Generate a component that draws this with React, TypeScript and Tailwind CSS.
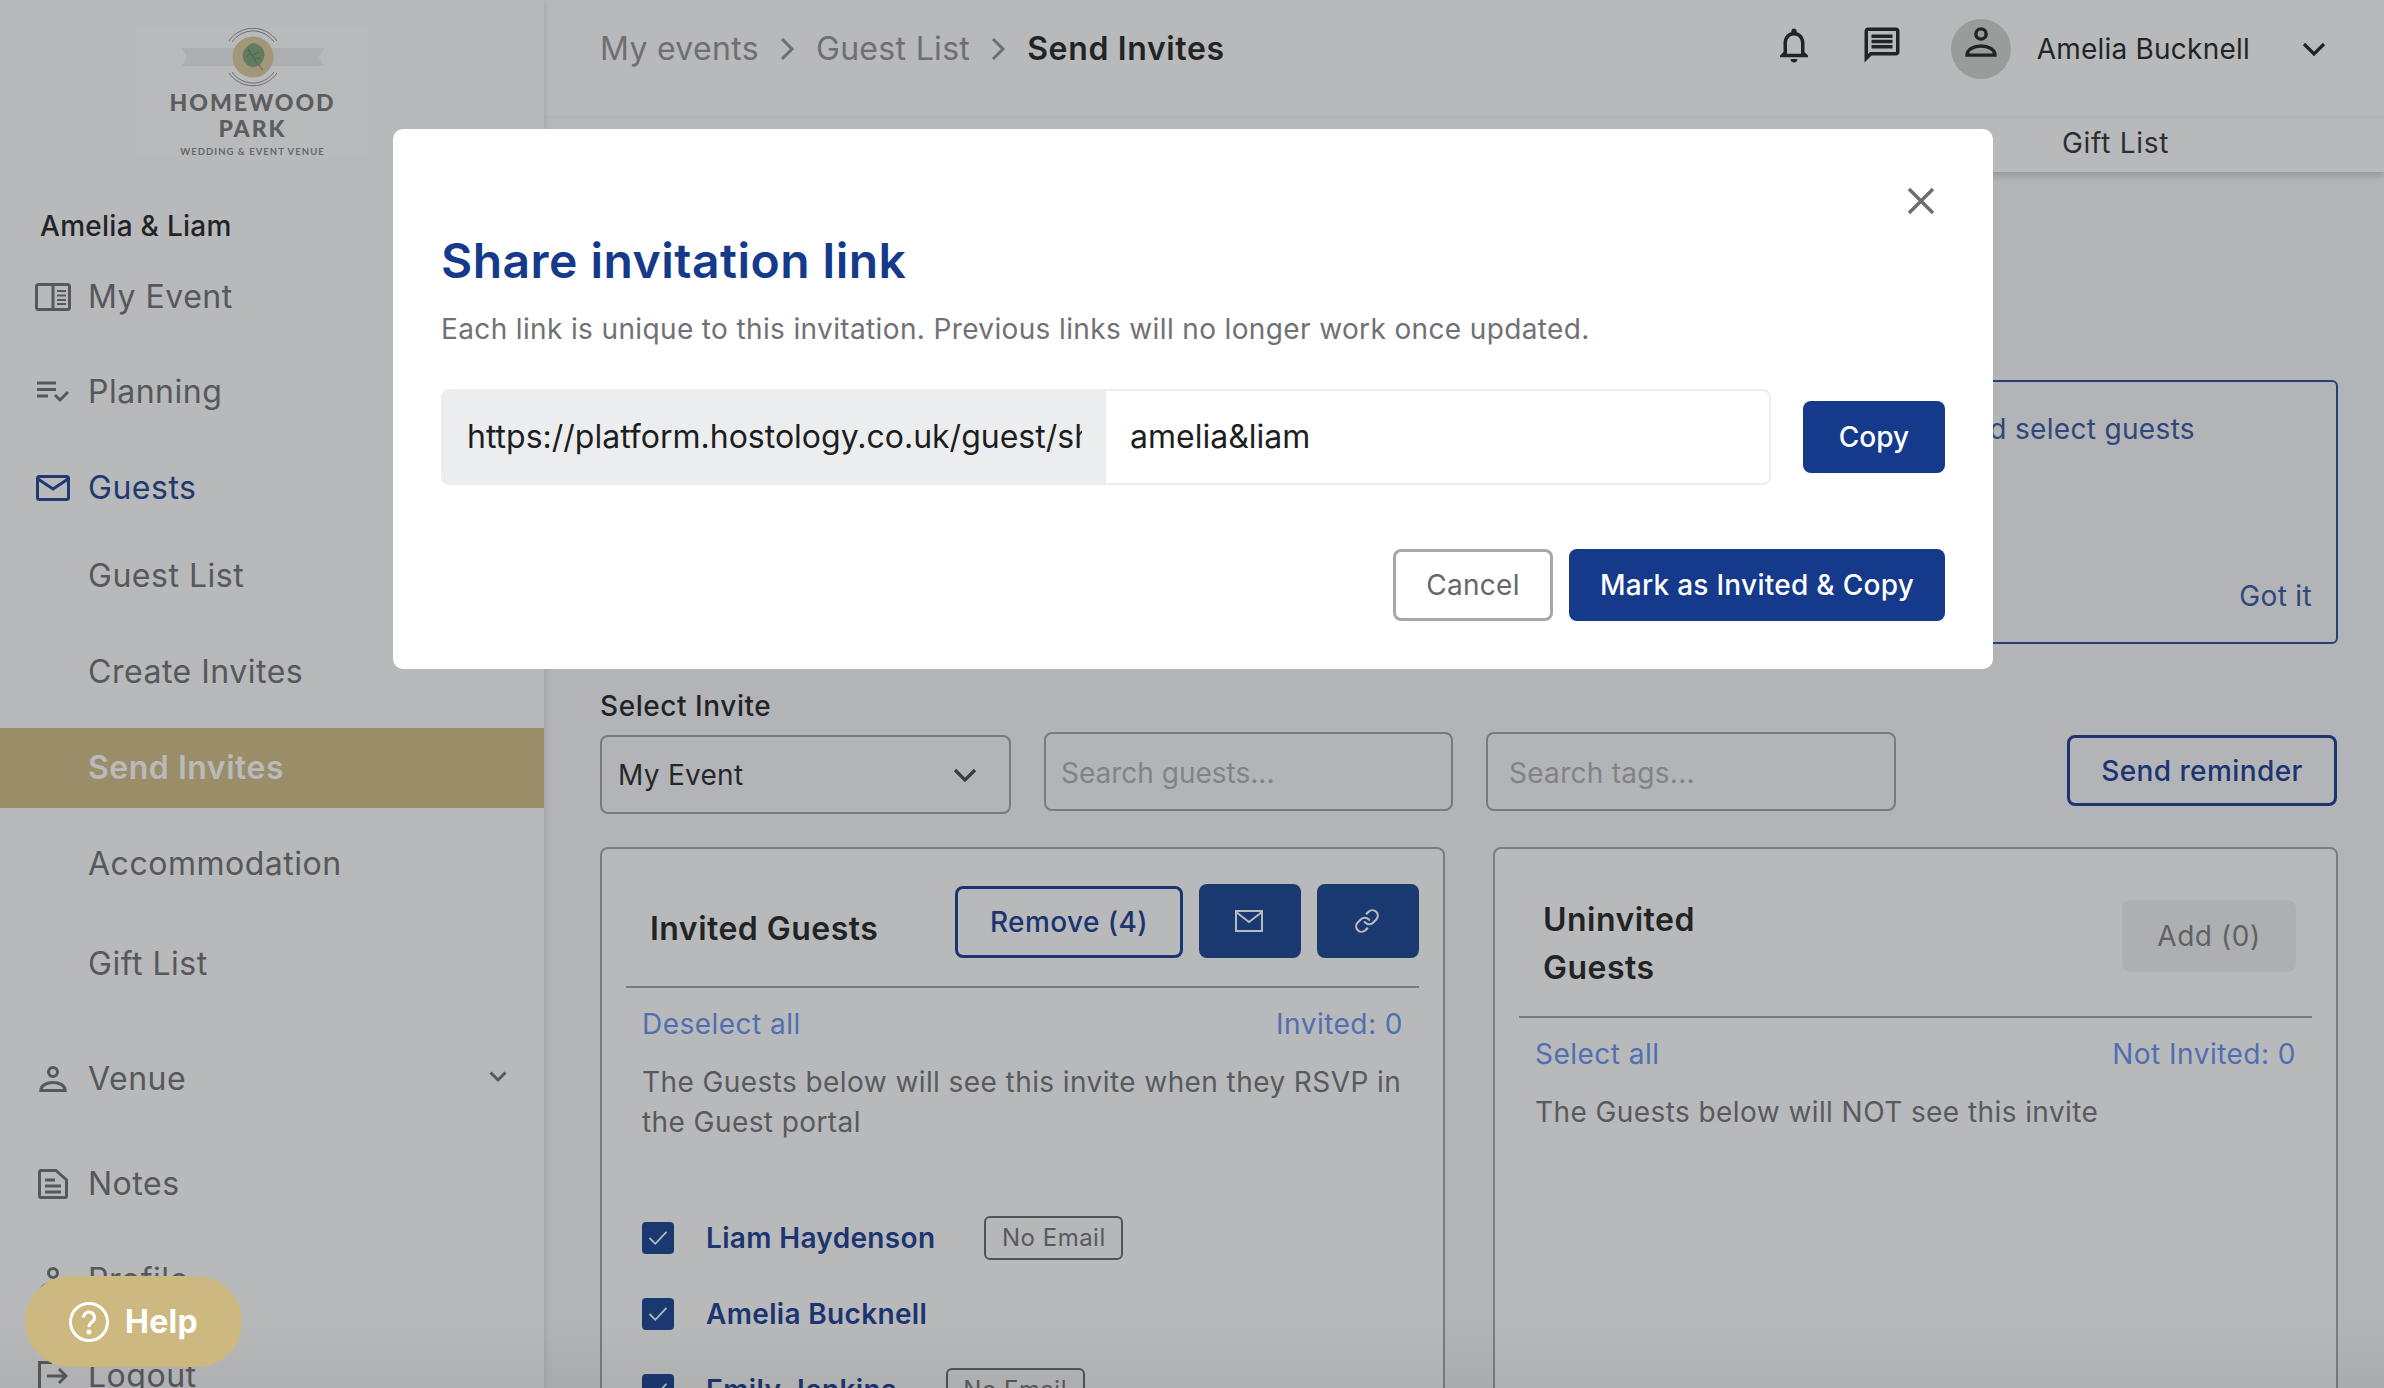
import React from "react";
import { Link } from "lucide-react";

const Person = ({ className = "" }: { className?: string }) => (
  <svg viewBox="0 0 28 28" className={className} fill="none" stroke="currentColor" strokeWidth="3">
    <circle cx="14" cy="7" r="4.5" />
    <path d="M1.8 25.5c0-5 5.6-8 12.2-8s12.2 3 12.2 8z" />
  </svg>
);

const NavIcon = ({ name }: { name: string }) => {
  if (name === "event")
    return (
      <svg viewBox="0 0 36 28" className="w-[36px] h-[28px]" fill="none" stroke="currentColor" strokeWidth="3">
        <rect x="1.5" y="1.5" width="33" height="25" rx="2" />
        <path d="M18 1.5v25" />
        <path d="M22 8h9M22 12.5h9M22 17h9M22 21h9" strokeWidth="2" />
      </svg>
    );
  if (name === "plan")
    return (
      <svg viewBox="0 0 32 22" className="w-[32px] h-[22px]" fill="none" stroke="currentColor" strokeWidth="3">
        <path d="M0 2h19M0 8.5h19M0 15h11" />
        <path d="M18 14l5 5 8-8" />
      </svg>
    );
  if (name === "mail")
    return (
      <svg viewBox="0 0 34 26" className="w-[34px] h-[26px]" fill="none" stroke="currentColor" strokeWidth="3">
        <rect x="1.5" y="1.5" width="31" height="23" rx="2" />
        <path d="M2 4l15 10L32 4" />
      </svg>
    );
  if (name === "person") return <Person className="w-[28px] h-[28px]" />;
  if (name === "notes")
    return (
      <svg viewBox="0 0 30 30" className="w-[30px] h-[30px]" fill="none" stroke="currentColor" strokeWidth="3">
        <path d="M1.5 3a1.5 1.5 0 0 1 1.5-1.5h15l10.5 9.5v16a1.5 1.5 0 0 1-1.5 1.5H3A1.5 1.5 0 0 1 1.5 27z" />
        <path d="M7 11h10M7 17h16M7 23h16" />
      </svg>
    );
  return (
    <svg viewBox="0 0 30 30" className="w-[30px] h-[30px]" fill="none" stroke="currentColor" strokeWidth="3">
      <path d="M14 1.5H1.5v27H14" />
      <path d="M9 15h19M21 8l7 7-7 7" />
    </svg>
  );
};

const Logo = () => (
  <div className="w-[233px] h-[127px] bg-white flex flex-col items-center">
    <svg viewBox="0 0 142 61" className="w-[142px] h-[61px] shrink-0" fill="none">
      <path d="M0 20h142l-5 9 5 9H0l5-9z" fill="#eceded" />
      <circle cx="71" cy="29" r="20.5" fill="#dcc998" />
      <path d="M71 15c3 0 5 2 7 3 2 2 4 3 4 6 1 3 0 6-1 8-1 3-3 5-6 6-3 2-5 1-8 0-3-2-5-4-6-8-1-3 0-6 2-9 2-3 5-5 8-6z" fill="#7c9e75" />
      <path d="M66 21l8 13 7 8M71 27l6-3M69 25l-5 4M73 31l6-1" stroke="#557a55" strokeWidth="1" />
      <path d="M47 13a29 29 0 0 1 48 0M50 14a25.5 25.5 0 0 1 42 0" stroke="#8a8b8c" strokeWidth="1" />
      <path d="M47 45a29 29 0 0 0 48 0M50 44a25.5 25.5 0 0 0 42 0" stroke="#8a8b8c" strokeWidth="1" />
    </svg>
    <div className="font-['Lato'] font-black text-[23px] leading-[26px] tracking-[0.085em] text-[#707070] text-center">
      HOMEWOOD
      <br />
      PARK
    </div>
    <div className="font-['Lato'] font-bold text-[9.5px] leading-[12px] mt-[5px] tracking-[0.11em] text-[#808080] whitespace-nowrap">
      WEDDING &amp; EVENT VENUE
    </div>
  </div>
);

const Top = ({ icon, label, className = "", active = false, children }: { icon: string; label: string; className?: string; active?: boolean; children?: React.ReactNode }) => (
  <div className={`flex items-center h-[96px] shrink-0 ${active ? "text-[#15398b]" : "text-[#68696c]"} ${className}`}>
    <div className="w-[88px] flex justify-center pl-[17px] shrink-0">
      <NavIcon name={icon} />
    </div>
    <span className="text-[32px] tracking-[0.016em]">{label}</span>
    {children}
  </div>
);

const Sub = ({ label, className = "", active = false }: { label: string; className?: string; active?: boolean }) => (
  <div
    className={`flex items-center h-[80px] shrink-0 pl-[88px] text-[32px] tracking-[0.016em] ${
      active ? "bg-[#d1ba7e] text-white font-semibold" : "text-[#68696c]"
    } ${className}`}
  >
    {label}
  </div>
);

const Sidebar = () => (
  <aside className="w-[544px] shrink-0 h-full bg-[#fdfdff] overflow-hidden flex flex-col shadow-[2px_0_6px_rgba(0,0,0,0.1)] z-10">
    <div className="h-[203px] shrink-0 pt-[28px] pl-[136px]">
      <Logo />
    </div>
    <div className="h-[46px] shrink-0 pl-[40px] flex items-center text-[28px] font-medium tracking-[0.01em] text-[#17181a]">Amelia &amp; Liam</div>
    <Top icon="event" label="My Event" />
    <Top icon="plan" label="Planning" className="-mt-[1px]" />
    <Top icon="mail" label="Guests" active />
    <Sub label="Guest List" />
    <Sub label="Create Invites" className="mt-[16px]" />
    <Sub label="Send Invites" active className="mt-[16px]" />
    <Sub label="Accommodation" className="mt-[16px]" />
    <Sub label="Gift List" className="mt-[20px]" />
    <Top icon="person" label="Venue" className="mt-[27px] relative">
      <svg viewBox="0 0 18 12" className="w-[18px] h-[12px] ml-auto mr-[37px] -mt-[4px]" fill="none" stroke="currentColor" strokeWidth="3">
        <path d="M1.5 1.5L9 9l7.5-7.5" />
      </svg>
    </Top>
    <Top icon="notes" label="Notes" className="mt-[9px]" />
    <Top icon="person" label="Profile" />
    <Top icon="logout" label="Logout" />
  </aside>
);

const Crumb = () => (
  <svg viewBox="0 0 16 24" className="w-[16px] h-[24px] ml-[21px] mr-[20px]" fill="none" stroke="currentColor" strokeWidth="3">
    <path d="M2 2l10 10L2 22" />
  </svg>
);

const Header = () => (
  <header className="h-[116px] shrink-0 bg-[#fdfdff] flex items-center pb-[18px] pl-[56px] pr-[58px] shadow-[0_2px_4px_rgba(0,0,0,0.06)] z-[2]">
    <nav className="flex items-center text-[32px] tracking-[0.01em] text-[#8c8d90]">
      <span>My events</span>
      <Crumb />
      <span>Guest List</span>
      <Crumb />
      <span className="font-semibold text-[#17181a] tracking-[0.02em]">Send Invites</span>
    </nav>
    <div className="ml-auto flex items-center text-[#17181a]">
      <svg viewBox="0 0 24 24" className="w-[42px] h-[42px] -mt-[8px]" fill="currentColor">
        <path d="M12 22c1.1 0 2-.9 2-2h-4c0 1.1.9 2 2 2zm6-6v-5c0-3.07-1.63-5.64-4.5-6.32V4c0-.83-.67-1.5-1.5-1.5s-1.5.67-1.5 1.5v.68C7.64 5.36 6 7.92 6 11v5l-2 2v1h16v-1l-2-2zm-2 1H8v-6c0-2.48 1.51-4.5 4-4.5s4 2.02 4 4.5v6z" />
      </svg>
      <svg viewBox="0 0 24 24" className="w-[42px] h-[42px] ml-[46px] -mt-[8px]" fill="currentColor">
        <path d="M20 2H4c-1.1 0-1.99.9-1.99 2L2 22l4-4h14c1.1 0 2-.9 2-2V4c0-1.1-.9-2-2-2zm0 14H5.17L4 17.17V4h16v12zM6 12h12v2H6zm0-3h12v2H6zm0-3h12v2H6z" />
      </svg>
      <div className="w-[60px] h-[60px] ml-[48px] rounded-full bg-[#cfd2cf] flex items-start justify-center pt-[7px]">
        <Person className="w-[32px] h-[32px]" />
      </div>
      <span className="ml-[26px] text-[28px] tracking-[0.008em]">Amelia Bucknell</span>
      <svg viewBox="0 0 24 14" className="w-[24px] h-[14px] ml-[52px]" fill="none" stroke="currentColor" strokeWidth="3.2">
        <path d="M2 2l10 10L22 2" />
      </svg>
    </div>
  </header>
);

const Tabs = () => (
  <div className="h-[56px] shrink-0 bg-[#fdfdff] flex items-center justify-end pb-[2px] pr-[215px] text-[28px] tracking-[0.025em] text-[#28292c] shadow-[0_4px_6px_rgba(40,50,80,0.22)] z-[1]">
    Gift List
  </div>
);

const Callout = () => (
  <div className="mt-[208px] h-[264px] shrink-0 border-2 border-[#1f4496] rounded-[6px] flex flex-col justify-between items-end pt-[27px] pb-[26px] pr-[24px] text-[28px] tracking-[0.012em] text-[#2c4f9a]">
    <p className="leading-[40px] mr-[117px] whitespace-nowrap">Choose an invite and select guests</p>
    <button className="leading-[40px]">Got it</button>
  </div>
);

const Controls = () => (
  <>
    <div className="mt-[42px] h-[40px] shrink-0 flex items-center text-[28px] font-medium tracking-[0.02em] text-[#17181a] mb-[6px]">Select Invite</div>
    <div className="flex items-start h-[79px] shrink-0">
      <div className="w-[411px] h-[79px] mt-[3px] border-2 border-[#9c9d9f] rounded-[8px] flex items-center justify-between pl-[16px] pr-[32px] text-[28px] tracking-[0.01em] text-[#1c1d20]">
        My Event
        <svg viewBox="0 0 24 14" className="w-[24px] h-[14px] text-[#3d3e40]" fill="none" stroke="currentColor" strokeWidth="3.2">
          <path d="M2 2l10 10L22 2" />
        </svg>
      </div>
      <input
        placeholder="Search guests..."
        className="w-[409px] h-[79px] ml-[33px] border-2 border-[#9c9d9f] rounded-[8px] pl-[15px] pt-[2px] text-[28px] placeholder:text-[#aaabad] bg-transparent outline-none"
      />
      <input
        placeholder="Search tags..."
        className="w-[410px] h-[79px] ml-[33px] border-2 border-[#9c9d9f] rounded-[8px] pl-[21px] pt-[2px] text-[28px] tracking-[0.01em] placeholder:text-[#aaabad] bg-transparent outline-none"
      />
      <button className="ml-auto mr-[1px] w-[270px] h-[71px] mt-[3px] border-[3px] border-[#0f338c] rounded-[8px] text-[28px] font-medium tracking-[0.015em] text-[#0f338c]">
        Send reminder
      </button>
    </div>
  </>
);

const Guest = ({ name, badge }: { name: string; badge?: string }) => (
  <div className="flex items-center h-[44px] mt-[32px] first:mt-0">
    <div className="w-[32px] h-[32px] rounded-[4px] bg-[#0a3a8c] flex items-center justify-center">
      <svg viewBox="0 0 22 18" className="w-[20px] h-[16px]" fill="none" stroke="white" strokeWidth="2">
        <path d="M1.5 9l6.5 6.5L20.5 2" />
      </svg>
    </div>
    <span className="ml-[32px] text-[28px] font-semibold tracking-[0.012em] text-[#0f338c]">{name}</span>
    {badge && (
      <span className="ml-[49px] w-[139px] h-[44px] border-2 border-[#5f6063] rounded-[6px] bg-[#fafafa] flex items-center justify-center text-[24px] tracking-[0.02em] text-[#6b6c70]">
        {badge}
      </span>
    )}
  </div>
);

const InvitedCard = () => (
  <section className="w-[845px] shrink-0 h-[600px] border-2 border-[#a0a0a2] rounded-[8px] bg-[#fefefe] px-[24px] pt-[35px]">
    <div className="flex items-start pb-[28px] border-b-2 border-[#9c9d9f]">
      <h2 className="ml-[24px] mt-[25px] h-[40px] text-[32px] leading-[40px] font-semibold tracking-[0.015em] text-[#17181a]">Invited Guests</h2>
      <button className="ml-auto mt-[2px] w-[228px] h-[72px] border-[3px] border-[#0f338c] rounded-[8px] text-[28px] font-medium tracking-[0.015em] text-[#0f338c]">
        Remove (4)
      </button>
      <button className="ml-[16px] w-[102px] h-[74px] pr-[3px] rounded-[8px] bg-[#0a3a8c] flex items-center justify-center">
        <svg viewBox="0 0 28 22" className="w-[28px] h-[22px]" fill="none" stroke="white" strokeWidth="2">
          <rect x="1" y="1" width="26" height="20" />
          <path d="M1 2l13 10L27 2" />
        </svg>
      </button>
      <button className="ml-[16px] w-[102px] h-[74px] pr-[3px] rounded-[8px] bg-[#0a3a8c] flex items-center justify-center">
        <Link className="w-[26px] h-[26px] text-white" strokeWidth={2} />
      </button>
    </div>
    <div className="px-[16px]">
      <div className="flex justify-between mt-[18px] h-[36px] items-center text-[28px] tracking-[0.017em] text-[#5c8df0]">
        <span>Deselect all</span>
        <span>Invited: 0</span>
      </div>
      <p className="mt-[20px] text-[28px] leading-[40px] tracking-[0.015em] text-[#6b6c70]">The Guests below will see this invite when they RSVP in the Guest portal</p>
      <div className="mt-[74px]">
        <Guest name="Liam Haydenson" badge="No Email" />
        <Guest name="Amelia Bucknell" />
        <Guest name="Emily Jenkins" badge="No Email" />
      </div>
    </div>
  </section>
);

const UninvitedCard = () => (
  <section className="flex-1 h-[600px] border-2 border-[#a0a0a2] rounded-[8px] bg-[#fefefe] px-[24px] pt-[47px]">
    <div className="flex items-start pb-[24px] border-b-2 border-[#9c9d9f]">
      <h2 className="ml-[24px] text-[32px] leading-[48px] font-semibold tracking-[0.015em] text-[#17181a]">
        Uninvited
        <br />
        Guests
      </h2>
      <button className="ml-auto mr-[16px] mt-[4px] w-[174px] h-[72px] rounded-[8px] bg-[#eeeff1] text-[28px] tracking-[0.02em] text-[#787878]">Add (0)</button>
    </div>
    <div className="px-[16px]">
      <div className="flex justify-between mt-[18px] h-[36px] items-center text-[28px] tracking-[0.017em] text-[#5c8df0]">
        <span>Select all</span>
        <span>Not Invited: 0</span>
      </div>
      <p className="mt-[20px] text-[28px] leading-[40px] tracking-[0.015em] text-[#6b6c70]">The Guests below will NOT see this invite</p>
    </div>
  </section>
);

const Modal = () => (
  <div className="absolute left-[393px] top-[129px] z-30 w-[1600px] h-[540px] bg-white rounded-[10px] pl-[48px] pr-[47px] pt-[58px]">
    <div className="flex justify-end pr-[11px] h-[28px]">
      <svg viewBox="0 0 28 28" className="w-[28px] h-[28px]" fill="none" stroke="#6b6d70" strokeWidth="3.4">
        <path d="M2 2l24 24M26 2L2 26" />
      </svg>
    </div>
    <h1 className="mt-[18px] h-[56px] leading-[56px] text-[48px] font-semibold tracking-[0.01em] text-[#15398b]">Share invitation link</h1>
    <p className="mt-[20px] h-[40px] leading-[40px] text-[28px] tracking-[0.013em] text-[#707174]">
      Each link is unique to this invitation. Previous links will no longer work once updated.
    </p>
    <div className="mt-[40px] flex items-center">
      <div className="flex h-[96px] w-[1330px] shrink-0 rounded-[8px] overflow-hidden border-2 border-[#ecedee]">
        <div className="w-[663px] shrink-0 bg-[#ecedee] pl-[24px] pr-[24px] flex items-center text-[32px] text-[#1d1e21]">
          <span className="block overflow-hidden whitespace-nowrap">https://platform.hostology.co.uk/guest/share/</span>
        </div>
        <div className="flex-1 flex items-center pl-[24px] text-[32px] text-[#1d1e21]">amelia&amp;liam</div>
      </div>
      <button className="ml-[32px] w-[142px] h-[72px] rounded-[8px] bg-[#15398b] text-white text-[28px] font-medium">Copy</button>
    </div>
    <div className="mt-[64px] flex justify-end mr-[1px]">
      <button className="w-[160px] h-[72px] rounded-[8px] border-[3px] border-[#a6a7a8] text-[28px] tracking-[0.01em] text-[#66676a]">Cancel</button>
      <button className="ml-[16px] w-[376px] h-[72px] rounded-[8px] bg-[#15398b] text-white text-[28px] font-medium tracking-[0.01em]">Mark as Invited &amp; Copy</button>
    </div>
  </div>
);

const Help = () => (
  <button className="absolute left-[25px] top-[1276px] z-30 w-[217px] h-[91px] rounded-full bg-[#cdb97f] flex items-center pl-[44px] text-white">
    <svg viewBox="0 0 40 40" className="w-[40px] h-[40px]" fill="none" stroke="currentColor" strokeWidth="3">
      <circle cx="20" cy="20" r="18.5" />
      <path d="M14.5 15.5a5.5 5.5 0 1 1 8.5 4.6c-2 1.3-3 2.3-3 4.9" />
      <circle cx="20" cy="30" r="1" fill="currentColor" />
    </svg>
    <span className="ml-[16px] text-[32px] font-bold tracking-[0.01em]">Help</span>
  </button>
);

export default function App() {
  return (
    <div className="relative w-[2384px] h-[1388px] overflow-hidden flex bg-[#f5f6fa] font-['Inter',sans-serif]">
      <Sidebar />
      <main className="flex-1 h-full flex flex-col min-w-0">
        <Header />
        <Tabs />
        <div className="flex-1 flex flex-col pl-[56px] pr-[46px] min-h-0">
          <Callout />
          <Controls />
          <div className="mt-[36px] flex gap-[48px] shrink-0">
            <InvitedCard />
            <UninvitedCard />
          </div>
        </div>
      </main>
      <div className="absolute inset-0 z-20 bg-[#37383c]/35" />
      <div className="absolute inset-x-0 bottom-0 h-[70px] z-20 bg-gradient-to-t from-black/5 to-transparent" />
      <Modal />
      <Help />
    </div>
  );
}
